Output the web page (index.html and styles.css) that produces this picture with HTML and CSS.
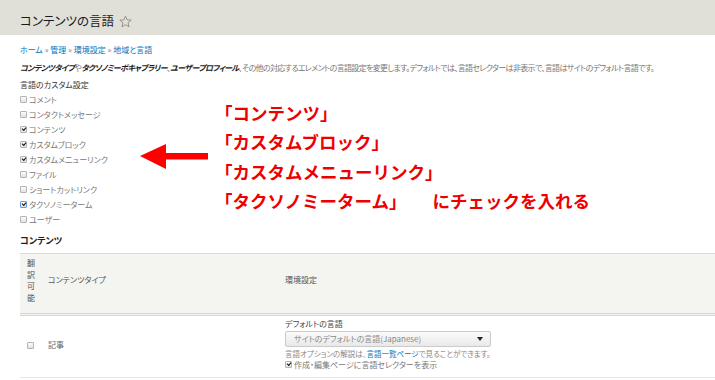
FILE: index.html
```html
<!DOCTYPE html>
<html lang="ja">

<head>
  <meta charset="UTF-8">
  <title>コンテンツの言語</title>
  <link rel="stylesheet" href="styles.css">
</head>

<body>
  <header class="page-header">
    <h1>コンテンツの言語</h1>
    <svg class="star" width="13" height="13" viewBox="0 0 24 24">
      <polygon points="12,2 14.9,8.9 22.5,9.5 16.7,14.4 18.5,21.8 12,17.9 5.5,21.8 7.3,14.4 1.5,9.5 9.1,8.9"
        fill="none" stroke="#8a8a84" stroke-width="1.6" stroke-linejoin="round" />
    </svg>
  </header>

  <main class="content">
    <nav class="breadcrumb">
      <a href="#">ホーム</a> » <a href="#">管理</a> » <a href="#">環境設定</a> » <a href="#">地域と言語</a>
    </nav>

    <p class="description">
      <em>コンテンツタイプ</em>や<em>タクソノミーボキャブラリー</em>、<em>ユーザープロフィール</em>、その他の対応するエレメントの言語設定を変更します。デフォルトでは、言語セレクターは非表示で、言語はサイトのデフォルト言語です。
    </p>

    <div class="custom-settings">
      <div class="settings-list">
        <h3>言語のカスタム設定</h3>
        <label class="check-item"><span class="checkbox"></span>コメント</label>
        <label class="check-item"><span class="checkbox"></span>コンタクトメッセージ</label>
        <label class="check-item"><span class="checkbox checked"></span>コンテンツ</label>
        <label class="check-item"><span class="checkbox checked"></span>カスタムブロック</label>
        <label class="check-item"><span class="checkbox checked"></span>カスタムメニューリンク</label>
        <label class="check-item"><span class="checkbox"></span>ファイル</label>
        <label class="check-item"><span class="checkbox"></span>ショートカットリンク</label>
        <label class="check-item"><span class="checkbox checked focused"></span>タクソノミーターム</label>
        <label class="check-item"><span class="checkbox"></span>ユーザー</label>
      </div>

      <div class="annotation">
        <svg class="arrow" width="70" height="26" viewBox="0 0 70 26">
          <polygon points="0,12 26,0 26,9 68,9 68,15.5 26,15.5 26,25" fill="#f00" />
        </svg>
        <div class="annotation-text">
          <p>「コンテンツ」</p>
          <p>「カスタムブロック」</p>
          <p>「カスタムメニューリンク」</p>
          <p>「タクソノミーターム」<span class="note">にチェックを入れる</span></p>
        </div>
      </div>
    </div>

    <h2 class="section-title">コンテンツ</h2>

    <table class="lang-table">
      <colgroup>
        <col class="col-check">
        <col class="col-type">
        <col>
      </colgroup>
      <thead>
        <tr>
          <th>翻訳可能</th>
          <th>コンテンツタイプ</th>
          <th>環境設定</th>
        </tr>
      </thead>
      <tbody>
        <tr>
          <td><span class="checkbox"></span></td>
          <td>記事</td>
          <td class="settings-cell">
            <div class="field-label">デフォルトの言語</div>
            <div class="select">サイトのデフォルトの言語(Japanese)<span class="select-arrow"></span></div>
            <div class="help">言語オプションの解説は、<a href="#">言語一覧ページ</a>で見ることができます。</div>
            <label class="check-item small"><span class="checkbox checked"></span>作成・編集ページに言語セレクターを表示</label>
          </td>
        </tr>
      </tbody>
    </table>
  </main>
</body>

</html>
```

FILE: styles.css
```css
* {
  margin: 0;
  padding: 0;
  box-sizing: border-box;
}

body {
  font-family: "Noto Sans CJK JP", "Noto Sans", sans-serif;
  font-feature-settings: "palt";
  background-color: #fff;
  color: #666;
  font-size: 8px;
  overflow: hidden;
}

a {
  color: #0074bd;
  text-decoration: none;
}

/* ヘッダー */
.page-header {
  display: flex;
  align-items: center;
  gap: 5px;
  height: 35px;
  padding: 6px 20px 0;
  background-color: #e0dfd8;
}

.page-header h1 {
  font-size: 12.5px;
  font-weight: 400;
  color: #1a1a1a;
}

.star {
  margin-top: 1px;
}

.content {
  padding: 7px 0 0 20px;
}

.breadcrumb {
  line-height: 15px;
  color: #777;
}

.description {
  margin-top: 3px;
  line-height: 15px;
  color: #777;
  letter-spacing: -0.65px;
  white-space: nowrap;
}

.description em {
  font-weight: 700;
  color: #222;
}

/* カスタム設定 */
.custom-settings {
  display: flex;
  align-items: center;
  margin-top: 2px;
}

.settings-list {
  width: 120px;
}

.settings-list h3 {
  font-size: 8px;
  font-weight: 400;
  line-height: 15px;
  color: #333;
}

.check-item {
  display: flex;
  align-items: center;
  gap: 2px;
  line-height: 15px;
  color: #777;
}

.checkbox {
  position: relative;
  display: inline-block;
  width: 7px;
  height: 7px;
  border: 1px solid #b4b4b4;
  border-radius: 1px;
  background: linear-gradient(#fdfdfd, #e2e2e2);
}

.checkbox.checked:after {
  content: "";
  position: absolute;
  left: 1px;
  top: 0;
  width: 3px;
  height: 2px;
  border-left: 1.5px solid #111;
  border-bottom: 1.5px solid #111;
  transform: rotate(-50deg);
}

.checkbox.focused {
  border-color: #6b9ee0;
}

/* 赤い注釈 */
.annotation {
  display: flex;
  align-items: center;
  margin-top: 9px;
}

.arrow {
  display: block;
  margin-right: 5px;
}

.annotation-text {
  font-size: 17.5px;
  font-weight: 700;
  line-height: 29.5px;
  color: #ee0000;
  font-feature-settings: normal;
}

.annotation-text .note {
  margin-left: 26px;
}

/* コンテンツ表 */
.section-title {
  margin-top: 6px;
  font-size: 9px;
  font-weight: 700;
  line-height: 15px;
  color: #222;
}

.lang-table {
  width: 100%;
  margin-top: 5px;
  border-collapse: collapse;
  table-layout: fixed;
}

.col-check {
  width: 20px;
}

.col-type {
  width: 240px;
}

.lang-table th {
  padding: 3px 7px 10px;
  font-weight: 400;
  line-height: 11.5px;
  text-align: left;
  color: #555;
  background-color: #f4f4f0;
  border-top: 1px solid #dcdcd6;
  border-bottom: 3px double #d6d6d0;
  vertical-align: middle;
}

.lang-table th:nth-child(2),
.lang-table td:nth-child(2) {
  padding-left: 8px;
}

.lang-table th:nth-child(3),
.lang-table td:nth-child(3) {
  padding-left: 5px;
}

.lang-table td {
  padding: 2px 7px 7px;
  color: #666;
  vertical-align: middle;
  border-bottom: 1px solid #e6e6e2;
}

.lang-table td .checkbox {
  vertical-align: middle;
}

.field-label {
  line-height: 11px;
  color: #444;
}

.select {
  position: relative;
  width: 206px;
  height: 16px;
  margin-top: 2px;
  padding-left: 8px;
  line-height: 14px;
  color: #888;
  border: 1px solid #cacaca;
  border-radius: 2px;
  background: linear-gradient(#fbfbfb, #e9e9e9);
}

.select-arrow {
  position: absolute;
  right: 7px;
  top: 5px;
  border-left: 3px solid transparent;
  border-right: 3px solid transparent;
  border-top: 4px solid #222;
}

.help {
  margin-top: 1px;
  font-size: 7.5px;
  line-height: 11px;
  color: #888;
}

.check-item.small {
  line-height: 11px;
  color: #777;
}
```
